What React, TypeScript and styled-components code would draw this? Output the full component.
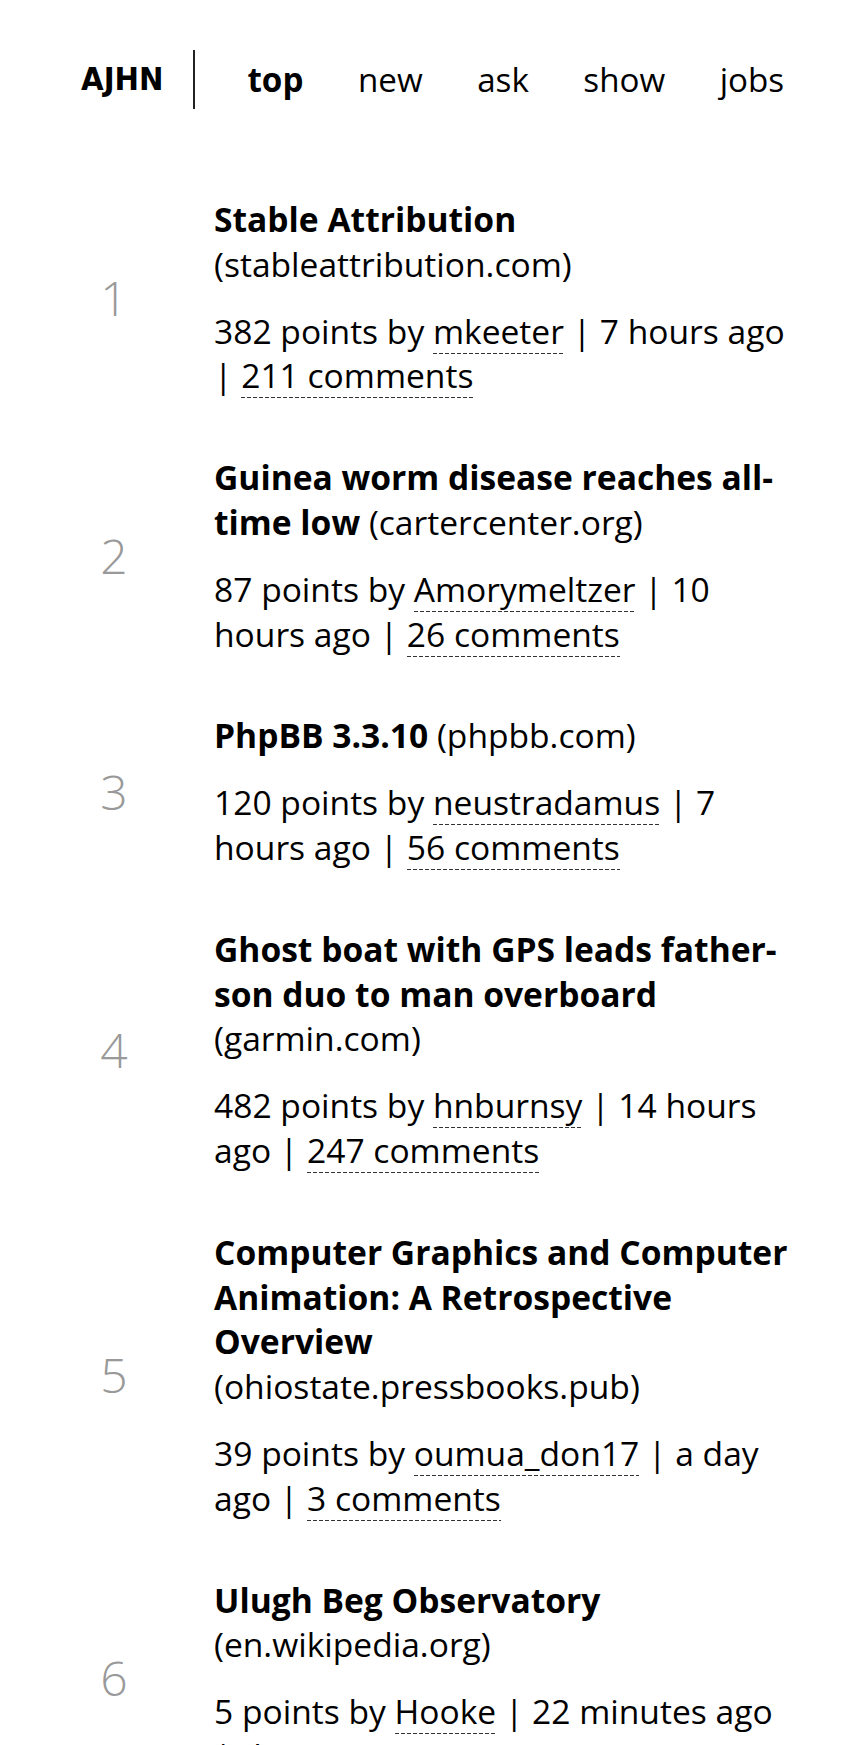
import React from "react";
import styled, { createGlobalStyle } from "styled-components";

const GlobalStyle = createGlobalStyle`
  html, body {
    margin: 0;
    padding: 0;
    background: #ffffff;
  }
  body {
    font-family: "Open Sans", "Noto Sans", sans-serif;
    color: #000000;
    font-size: 33.6px;
    line-height: 44.8px;
  }
`;

const Page = styled.div`
  padding: 50px 74px 40px 81px;
`;

const Header = styled.header`
  display: flex;
  align-items: center;
`;

const Logo = styled.div`
  font-family: "Liberation Sans Narrow", "DejaVu Sans Condensed", "Liberation Sans", sans-serif;
  font-weight: 700;
  font-size: 32.5px;
  line-height: 45px;
  padding: 7px 30px 7px 0;
  border-right: 2px solid #222;
  margin-right: 52px;
`;

const NavList = styled.nav`
  display: flex;
  align-items: center;
  gap: 54.5px;
`;

const NavLink = styled.a<{ $active?: boolean }>`
  font-size: 33.2px;
  line-height: 45px;
  font-weight: ${(p) => (p.$active ? 700 : 400)};
  color: #000;
  text-decoration: none;
`;

const List = styled.ol`
  list-style: none;
  margin: 88px 0 0 0;
  padding: 0;
  display: flex;
  flex-direction: column;
  gap: 57px;
`;

const Item = styled.li`
  display: grid;
  grid-template-columns: 66px 1fr;
  column-gap: 67px;
  align-items: center;
`;

const Rank = styled.div`
  font-size: 48px;
  line-height: 60px;
  font-weight: 300;
  color: #999999;
  text-align: center;
`;

const Body = styled.div`
  display: flex;
  flex-direction: column;
  gap: 22px;
`;

const TitleLine = styled.div``;

const Title = styled.a`
  font-weight: 700;
  color: #000;
  text-decoration: none;
`;

const Domain = styled.span`
  font-weight: 400;
`;

const Meta = styled.div``;

const Dashed = styled.a`
  color: #000;
  text-decoration: none;
  background-image: linear-gradient(to right, #333 66%, transparent 66%);
  background-size: 6px 1px;
  background-repeat: repeat-x;
  background-position: 0 100%;
`;

type Story = {
  title: string;
  domain: string;
  points: number;
  user: string;
  age: string;
  comments: string;
};

const stories: Story[] = [
  { title: "Stable Attribution", domain: "stableattribution.com", points: 382, user: "mkeeter", age: "7 hours ago", comments: "211 comments" },
  { title: "Guinea worm disease reaches all-time low", domain: "cartercenter.org", points: 87, user: "Amorymeltzer", age: "10 hours ago", comments: "26 comments" },
  { title: "PhpBB 3.3.10", domain: "phpbb.com", points: 120, user: "neustradamus", age: "7 hours ago", comments: "56 comments" },
  { title: "Ghost boat with GPS leads father-son duo to man overboard", domain: "garmin.com", points: 482, user: "hnburnsy", age: "14 hours ago", comments: "247 comments" },
  { title: "Computer Graphics and Computer Animation: A Retrospective Overview", domain: "ohiostate.pressbooks.pub", points: 39, user: "oumua_don17", age: "a day ago", comments: "3 comments" },
  { title: "Ulugh Beg Observatory", domain: "en.wikipedia.org", points: 5, user: "Hooke", age: "22 minutes ago", comments: "discuss" },
];

export default function App() {
  return (
    <>
      <GlobalStyle />
      <Page>
        <Header>
          <Logo>AJHN</Logo>
          <NavList>
            <NavLink $active href="#">top</NavLink>
            <NavLink href="#">new</NavLink>
            <NavLink href="#">ask</NavLink>
            <NavLink href="#">show</NavLink>
            <NavLink href="#">jobs</NavLink>
          </NavList>
        </Header>
        <List>
          {stories.map((s, i) => (
            <Item key={i}>
              <Rank>{i + 1}</Rank>
              <Body>
                <TitleLine>
                  <Title href="#">{s.title}</Title> <Domain>({s.domain})</Domain>
                </TitleLine>
                <Meta>
                  {s.points} points by <Dashed href="#">{s.user}</Dashed> | {s.age} |{" "}
                  <Dashed href="#">{s.comments}</Dashed>
                </Meta>
              </Body>
            </Item>
          ))}
        </List>
      </Page>
    </>
  );
}
